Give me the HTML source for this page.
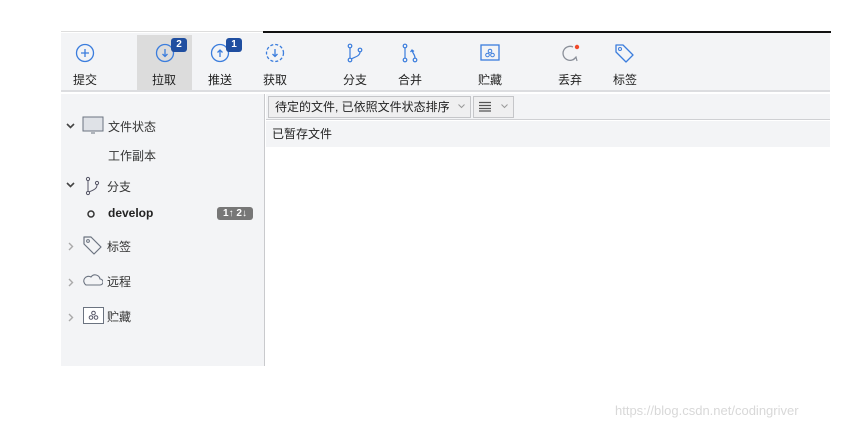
<!DOCTYPE html>
<html><head><meta charset="utf-8"><style>
*{margin:0;padding:0;box-sizing:border-box}
body{width:850px;height:431px;background:#fff;position:relative;overflow:hidden;font-family:"Liberation Sans","Noto Sans CJK SC",sans-serif;color:#222}
.abs{position:absolute}
.tb{left:61px;top:33px;width:769px;height:59px;background:#f3f4f6;border-bottom:2px solid #dcdde0}
.lbl{position:absolute;top:71px;font-size:12px;width:60px;text-align:center}
.ic{position:absolute;top:43px}
.badge{position:absolute;background:#1f4ea0;color:#fff;font-size:10px;font-weight:bold;border-radius:3px;width:16px;height:14px;text-align:center;line-height:14px}
.side{left:61px;top:94px;width:204px;height:272px;background:#f3f4f6;border-right:1px solid #c9cacd}
.si{position:absolute;font-size:12px;color:#333}
.chev{position:absolute}
</style></head><body>
<div class="abs" style="left:61px;top:31px;width:202px;height:1px;background:#ddd"></div>
<div class="abs" style="left:263px;top:31px;width:568px;height:2px;background:#111"></div>
<div class="abs tb"></div>
<div class="abs" style="left:137px;top:35px;width:55px;height:55px;background:#dcdcdc"></div>
<svg class="ic" style="left:75px" width="20" height="20"><circle cx="10" cy="10" r="8.5" fill="none" stroke="#3b7ddd" stroke-width="1.3"/><path d="M10 6v8M6 10h8" stroke="#3b7ddd" stroke-width="1.3"/></svg>
<svg class="ic" style="left:155px" width="20" height="20"><circle cx="10" cy="10" r="8.5" fill="none" stroke="#3b7ddd" stroke-width="1.3"/><path d="M10 6v7M7.5 11l2.5 2.5 2.5-2.5" stroke="#3b7ddd" stroke-width="1.3" fill="none"/></svg>
<div class="badge" style="left:171px;top:38px">2</div>
<svg class="ic" style="left:210px" width="20" height="20"><circle cx="10" cy="10" r="8.5" fill="none" stroke="#3b7ddd" stroke-width="1.3"/><path d="M10 14V7M7.5 9.5 10 7l2.5 2.5" stroke="#3b7ddd" stroke-width="1.3" fill="none"/></svg>
<div class="badge" style="left:226px;top:38px">1</div>
<svg class="ic" style="left:265px" width="20" height="20"><circle cx="10" cy="10" r="8.5" fill="none" stroke="#3b7ddd" stroke-width="1.3" stroke-dasharray="3 2"/><path d="M10 6v7M7.5 11l2.5 2.5 2.5-2.5" stroke="#3b7ddd" stroke-width="1.3" fill="none"/></svg>
<svg class="ic" style="left:345px" width="20" height="20"><circle cx="5" cy="3" r="1.8" fill="none" stroke="#3b7ddd" stroke-width="1.2"/><circle cx="5" cy="17" r="1.8" fill="none" stroke="#3b7ddd" stroke-width="1.2"/><circle cx="15" cy="7" r="1.8" fill="none" stroke="#3b7ddd" stroke-width="1.2"/><path d="M5 5v10M15 9c0 4-5 5-9 7" stroke="#3b7ddd" stroke-width="1.2" fill="none"/></svg>
<svg class="ic" style="left:400px" width="20" height="20"><circle cx="5" cy="3" r="1.8" fill="none" stroke="#3b7ddd" stroke-width="1.2"/><circle cx="5" cy="17" r="1.8" fill="none" stroke="#3b7ddd" stroke-width="1.2"/><circle cx="15" cy="17" r="1.8" fill="none" stroke="#3b7ddd" stroke-width="1.2"/><path d="M5 5v10M15 15c0-4-3-5-3-8M10.5 9l1.5-2 2 1.5" stroke="#3b7ddd" stroke-width="1.2" fill="none"/></svg>
<svg class="ic" style="left:480px" width="20" height="20"><rect x="1" y="2" width="18" height="15" fill="none" stroke="#3b7ddd" stroke-width="1.3"/><circle cx="10" cy="8" r="1.8" fill="none" stroke="#3b7ddd"/><circle cx="7.5" cy="12" r="1.8" fill="none" stroke="#3b7ddd"/><circle cx="12.5" cy="12" r="1.8" fill="none" stroke="#3b7ddd"/></svg>
<svg class="ic" style="left:560px" width="22" height="20"><path d="M16 14A7 7 0 1 1 13 4" fill="none" stroke="#8a8f99" stroke-width="1.3"/><path d="M13 17l3-3 1 4" fill="none" stroke="#8a8f99" stroke-width="1.2"/><circle cx="17" cy="4" r="2.2" fill="#f04a2a"/></svg>
<svg class="ic" style="left:614px" width="22" height="22"><path d="M2 2h7l10 10-7 7L2 9z" fill="none" stroke="#3b7ddd" stroke-width="1.3" stroke-linejoin="round"/><circle cx="6" cy="6" r="1.5" fill="none" stroke="#3b7ddd"/></svg>
<div class="lbl" style="left:55px">提交</div>
<div class="lbl" style="left:134px">拉取</div>
<div class="lbl" style="left:190px">推送</div>
<div class="lbl" style="left:245px">获取</div>
<div class="lbl" style="left:325px">分支</div>
<div class="lbl" style="left:380px">合并</div>
<div class="lbl" style="left:460px">贮藏</div>
<div class="lbl" style="left:540px">丢弃</div>
<div class="lbl" style="left:595px">标签</div>

<div class="abs side"></div>
<svg class="chev" style="left:66px;top:123px" width="9" height="6"><path d="M1 1l3.5 3.5L8 1" fill="none" stroke="#444" stroke-width="1.6"/></svg>
<svg class="abs" style="left:82px;top:116px" width="22" height="20"><rect x="1" y="1" width="20" height="14" fill="#dfe2e7" stroke="#6b7380" stroke-width="1"/><path d="M9 17h4" stroke="#6b7380"/></svg>
<div class="si" style="left:108px;top:118px">文件状态</div>
<div class="si" style="left:108px;top:147px">工作副本</div>
<svg class="chev" style="left:66px;top:182px" width="9" height="6"><path d="M1 1l3.5 3.5L8 1" fill="none" stroke="#444" stroke-width="1.6"/></svg>
<svg class="abs" style="left:84px;top:176px" width="18" height="20"><circle cx="4" cy="3" r="1.6" fill="none" stroke="#556"/><circle cx="4" cy="17" r="1.6" fill="none" stroke="#556"/><circle cx="13" cy="7" r="1.6" fill="none" stroke="#556"/><path d="M4 5v10M13 9c0 4-4 5-8 7" stroke="#556" fill="none"/></svg>
<div class="si" style="left:107px;top:178px">分支</div>
<svg class="abs" style="left:86px;top:209px" width="10" height="10"><circle cx="5" cy="5" r="3" fill="none" stroke="#333" stroke-width="1.5"/></svg>
<div class="si" style="left:108px;top:206px;font-weight:bold;color:#222">develop</div>
<div class="abs" style="left:217px;top:207px;width:36px;height:13px;background:#777;border-radius:3px;color:#fff;font-size:10px;font-weight:bold;text-align:center;line-height:13px">1↑ 2↓</div>
<svg class="chev" style="left:68px;top:242px" width="6" height="9"><path d="M1 1l3.5 3.5L1 8" fill="none" stroke="#aaa" stroke-width="1.4"/></svg>
<svg class="abs" style="left:82px;top:235px" width="22" height="22"><path d="M2 2h7l10 10-7 7L2 9z" fill="none" stroke="#6b7380" stroke-width="1.2" stroke-linejoin="round"/><circle cx="6" cy="6" r="1.4" fill="none" stroke="#6b7380"/></svg>
<div class="si" style="left:107px;top:238px">标签</div>
<svg class="chev" style="left:68px;top:278px" width="6" height="9"><path d="M1 1l3.5 3.5L1 8" fill="none" stroke="#aaa" stroke-width="1.4"/></svg>
<svg class="abs" style="left:83px;top:273px" width="20" height="14"><path d="M3 12h14a3 3 0 0 0 0-6 5 5 0 0 0-9-2 4 4 0 0 0-5 8z" fill="none" stroke="#6b7380" stroke-width="1.1"/></svg>
<div class="si" style="left:107px;top:273px">远程</div>
<svg class="chev" style="left:68px;top:313px" width="6" height="9"><path d="M1 1l3.5 3.5L1 8" fill="none" stroke="#aaa" stroke-width="1.4"/></svg>
<svg class="abs" style="left:83px;top:307px" width="21" height="17"><rect x=".5" y=".5" width="20" height="16" fill="#fff" stroke="#6b7380"/><circle cx="10.5" cy="6" r="1.8" fill="none" stroke="#556"/><circle cx="8" cy="10.5" r="1.8" fill="none" stroke="#556"/><circle cx="13" cy="10.5" r="1.8" fill="none" stroke="#556"/></svg>
<div class="si" style="left:107px;top:308px">贮藏</div>

<div class="abs" style="left:266px;top:94px;width:564px;height:26px;background:#f3f4f6;border-bottom:1px solid #cfd0d3"></div>
<div class="abs" style="left:268px;top:96px;width:203px;height:22px;border:1px solid #c5c6c9;background:#efeff0;font-size:12px;line-height:20px;padding-left:6px">待定的文件, 已依照文件状态排序</div>
<svg class="abs" style="left:458px;top:104px" width="7" height="5"><path d="M.5.5l3 3 3-3" fill="none" stroke="#999"/></svg>
<div class="abs" style="left:473px;top:96px;width:41px;height:22px;border:1px solid #c5c6c9;background:#efeff0"></div>
<svg class="abs" style="left:479px;top:101px" width="12" height="11"><path d="M0 1.5h12M0 4.5h12M0 7.5h12M0 10h12" stroke="#555" stroke-width="1.3"/></svg>
<svg class="abs" style="left:501px;top:104px" width="7" height="5"><path d="M.5.5l3 3 3-3" fill="none" stroke="#999"/></svg>
<div class="abs" style="left:266px;top:121px;width:564px;height:26px;background:#f3f4f6;font-size:12px;line-height:26px;padding-left:6px">已暂存文件</div>
<div class="abs" style="left:615px;top:403px;font-size:13px;color:#d8d8d8">https://blog.csdn.net/codingriver</div>
</body></html>
